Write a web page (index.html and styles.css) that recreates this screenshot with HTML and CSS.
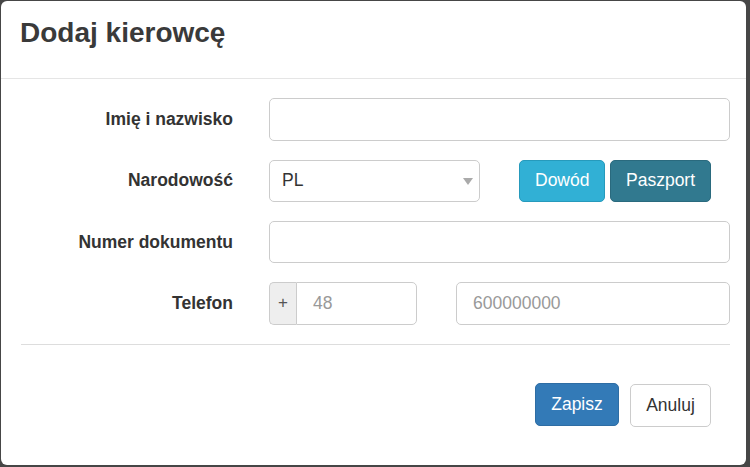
FILE: index.html
```html
<!DOCTYPE html>
<html lang="pl">
<head>
<meta charset="utf-8">
<title>Dodaj kierowcę</title>
<link rel="stylesheet" href="styles.css">
</head>
<body>
<div class="modal">
  <div class="modal-header">
    <h4 class="modal-title">Dodaj kierowcę</h4>
  </div>
  <div class="modal-body">
    <div class="form">
      <label class="label">Imię i nazwisko</label>
      <div class="field"><div class="input"></div></div>

      <label class="label">Narodowość</label>
      <div class="field row-split">
        <div class="input select">
          <span class="value">PL</span>
          <span class="caret"></span>
        </div>
        <div class="btn-group">
          <button class="btn btn-info">Dowód</button>
          <button class="btn btn-dark">Paszport</button>
        </div>
      </div>

      <label class="label">Numer dokumentu</label>
      <div class="field"><div class="input"></div></div>

      <label class="label">Telefon</label>
      <div class="field row-split">
        <div class="input-group">
          <span class="addon">+</span>
          <div class="input grouped"><span class="placeholder">48</span></div>
        </div>
        <div class="input phone"><span class="placeholder">600000000</span></div>
      </div>
    </div>
    <div class="divider"></div>
  </div>
  <div class="modal-footer">
    <button class="btn btn-primary">Zapisz</button>
    <button class="btn btn-default">Anuluj</button>
  </div>
</div>
</body>
</html>
```
FILE: styles.css
```css
html, body {
  margin: 0;
  padding: 0;
}
body {
  width: 750px;
  height: 467px;
  background: #464646;
  font-family: "Liberation Sans", Arial, sans-serif;
  color: #333;
  overflow: hidden;
}
.modal {
  margin: 1px 4px 2px 1px;
  height: 464px;
  background: #fff;
  border-radius: 6px;
  overflow: hidden;
  display: flex;
  flex-direction: column;
}
.modal-header {
  padding: 16px 19px 29px 19px;
  border-bottom: 1px solid #e5e5e5;
}
.modal-title {
  margin: 0;
  font-size: 28px;
  line-height: 32px;
  font-weight: bold;
  color: #3a3a3a;
}
.modal-body {
  padding: 19.3px 16px 0 19px;
}
.form {
  display: grid;
  grid-template-columns: 213px 1fr;
  column-gap: 36px;
  row-gap: 18.75px;
}
.label {
  font-size: 17.5px;
  font-weight: bold;
  text-align: right;
  display: flex;
  align-items: center;
  justify-content: flex-end;
  height: 42.5px;
}
.field {
  display: flex;
  align-items: center;
}
.input {
  box-sizing: border-box;
  height: 42.5px;
  width: 100%;
  border: 1px solid #ccc;
  border-radius: 5px;
  background: #fff;
  display: flex;
  align-items: center;
  padding: 0 15px;
  font-size: 17.5px;
  color: #333;
}
.select {
  width: 211px;
  flex: none;
  padding: 0 6px 0 12px;
  justify-content: space-between;
}
.caret {
  width: 0;
  height: 0;
  border-left: 5px solid transparent;
  border-right: 5px solid transparent;
  border-top: 7px solid #aaa;
  margin-top: 2px;
}
.row-split {
  gap: 39px;
}
.btn-group {
  display: flex;
  gap: 5px;
}
.btn {
  box-sizing: border-box;
  height: 42px;
  border-radius: 5px;
  border: 1px solid transparent;
  font-family: "Liberation Sans", Arial, sans-serif;
  font-size: 17.5px;
  padding: 0 15px;
  color: #fff;
  cursor: pointer;
}
.btn-info {
  width: 86px;
  background: #31b0d5;
  border-color: #269abc;
}
.btn-dark {
  width: 101px;
  background: #31798f;
  border-color: #2a6a7e;
}
.input-group {
  display: flex;
  width: 148px;
  flex: none;
}
.addon {
  box-sizing: border-box;
  width: 27px;
  height: 42.5px;
  flex: none;
  background: #eee;
  border: 1px solid #ccc;
  border-right: 0;
  border-radius: 5px 0 0 5px;
  display: flex;
  align-items: center;
  justify-content: center;
  font-size: 17px;
  color: #555;
}
.grouped {
  border-radius: 0 5px 5px 0;
  padding-left: 16px;
}
.phone {
  flex: 1;
  padding-left: 16px;
}
.placeholder {
  color: #999;
}
.divider {
  margin-top: 19.5px;
  margin-left: 1px;
  height: 1px;
  background: #ddd;
}
.modal-footer {
  padding: 38px 35px 0 0;
  display: flex;
  justify-content: flex-end;
  gap: 11px;
}
.btn-primary {
  width: 84px;
  height: 42.5px;
  background: #337ab7;
  border-color: #2e6da4;
}
.btn-default {
  width: 81px;
  height: 42.5px;
  margin-top: 1px;
  background: #fff;
  border-color: #ccc;
  color: #333;
}
```
